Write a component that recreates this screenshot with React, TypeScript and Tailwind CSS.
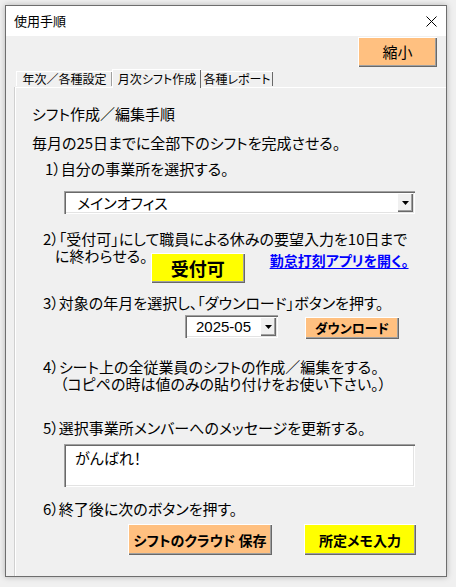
import React from "react";

const raised =
  "shadow-[inset_1px_1px_0_#ffffff,inset_-1px_-1px_0_#696969,inset_-2px_-2px_0_#a0a0a0]";
const sunken =
  "shadow-[inset_1px_1px_0_#a0a0a0,inset_2px_2px_0_#696969,inset_-1px_-1px_0_#ffffff,inset_-2px_-2px_0_#e3e3e3]";

function Arrow() {
  return (
    <div
      className={`w-[16px] h-[19px] bg-[#f0f0f0] flex items-center justify-center ${raised}`}
    >
      <svg width="7" height="4" viewBox="0 0 7 4">
        <polygon points="0,0 7,0 3.5,4" fill="#000" />
      </svg>
    </div>
  );
}

export default function App() {
  return (
    <div className="w-[456px] h-[587px] bg-[#f0f0f0] p-[5px] overflow-hidden text-black font-['Noto_Sans_CJK_JP',sans-serif] [font-feature-settings:'palt']">
      <div className="w-[442px] h-[572px] border border-[#6e6e6e] bg-[#f0f0f0] flex flex-col overflow-hidden shadow-[0_0_6px_rgba(0,0,0,0.25)]">
        {/* title bar */}
        <div className="h-[30px] shrink-0 bg-white flex items-center justify-between pl-[8px] pr-[9px]">
          <span className="text-[13px] leading-[16px]">使用手順</span>
          <svg width="11" height="11" viewBox="0 0 11 11">
            <path d="M0.5 0.5 L10.5 10.5 M10.5 0.5 L0.5 10.5" stroke="#000" strokeWidth="1" />
          </svg>
        </div>
        {/* body */}
        <div className="flex-1 flex flex-col">
          <div className="flex justify-end pr-[9px] pt-[1px]">
            <div
              className={`w-[79px] h-[30px] bg-[#ffc080] flex items-center justify-center text-[15px] leading-[18px] ${raised}`}
            >
              縮小
            </div>
          </div>
          {/* tabs */}
          <div className="flex items-end pl-[10px] h-[18px] mt-[2px] relative z-10 whitespace-nowrap">
            <div className="h-[15px] w-[96px] border-t border-l border-white shadow-[inset_-1px_0_0_#a0a0a0] flex items-center justify-center text-[12px] leading-[14px] mb-[1px]">
              年次／各種設定
            </div>
            <div className="h-[19px] w-[89px] -mb-[1px] bg-[#f0f0f0] border-t border-l border-white shadow-[inset_-1px_0_0_#696969] flex items-start justify-center pt-[1px] text-[12px] leading-[15px]">
              月次シフト作成
            </div>
            <div className="h-[15px] w-[72px] border-t border-white shadow-[inset_-1px_0_0_#696969] flex items-center justify-center text-[12px] leading-[14px] mb-[1px]">
              各種レポート
            </div>
          </div>
          {/* panel */}
          <div className="flex-1 ml-[9px] border-t border-l border-white shadow-[-1px_0_0_#d0d0d0] pl-[16px] pt-[16px] text-[15px] whitespace-nowrap">
            <div className="leading-[20px]">シフト作成／編集手順</div>
            <div className="leading-[20px] mt-[9px]">毎月の25日までに全部下のシフトを完成させる。</div>
            <div className="leading-[20px] mt-[6px] ml-[13px]">1）自分の事業所を選択する。</div>
            <div
              className={`mt-[12px] ml-[32px] w-[351px] h-[23px] bg-white flex items-center justify-between pl-[13px] pr-[2px] ${sunken}`}
            >
              <span className="text-[15px] leading-[18px]">メインオフィス</span>
              <Arrow />
            </div>
            <div className="mt-[16px] ml-[11px] leading-[17px]">
              2）「受付可」にして職員による休みの要望入力を10日まで
            </div>
            <div className="flex items-start">
              <div className="ml-[23px] leading-[17px]">に終わらせる。</div>
              <div
                className={`ml-[3px] mt-[6px] w-[94px] h-[30px] bg-[#ffff00] flex items-center justify-center font-bold text-[18px] leading-[20px] ${raised}`}
              >
                受付可
              </div>
              <div className="ml-[25px] mt-[5px] leading-[16px] text-[14px] font-bold text-[#0000ff] underline underline-offset-2">
                勤怠打刻アプリを開く。
              </div>
            </div>
            <div className="mt-[10px] ml-[11px] leading-[20px]">
              3）対象の年月を選択し、「ダウンロード」ボタンを押す。
            </div>
            <div className="flex items-start mt-[2px]">
              <div
                className={`ml-[153px] w-[93px] h-[23px] bg-white flex items-center justify-between pl-[11px] pr-[2px] ${sunken}`}
              >
                <span className="text-[15px] leading-[18px] font-['Liberation_Sans',sans-serif]">2025-05</span>
                <Arrow />
              </div>
              <div
                className={`ml-[27px] mt-[2px] w-[94px] h-[22px] bg-[#ffc080] flex items-center justify-center font-bold text-[13px] leading-[16px] ${raised}`}
              >
                ダウンロード
              </div>
            </div>
            <div className="mt-[19px] ml-[11px] leading-[17px]">
              4）シート上の全従業員のシフトの作成／編集をする。
            </div>
            <div className="ml-[28px] leading-[17px]">
              （コピペの時は値のみの貼り付けをお使い下さい。）
            </div>
            <div className="mt-[26px] ml-[11px] leading-[20px]">
              5）選択事業所メンバーへのメッセージを更新する。
            </div>
            <div
              className={`mt-[6px] ml-[32px] w-[351px] h-[43px] bg-white pl-[11px] pt-[3px] ${sunken}`}
            >
              <span className="text-[15px] leading-[18px]">がんばれ！</span>
            </div>
            <div className="mt-[12px] ml-[11px] leading-[20px]">6）終了後に次のボタンを押す。</div>
            <div className="flex mt-[5px]">
              <div
                className={`ml-[96px] w-[144px] h-[31px] bg-[#ffc080] flex items-center justify-center font-bold text-[14px] leading-[18px] ${raised}`}
              >
                シフトのクラウド 保存
              </div>
              <div
                className={`ml-[32px] w-[112px] h-[31px] bg-[#ffff00] flex items-center justify-center font-bold text-[14px] leading-[18px] ${raised}`}
              >
                所定メモ入力
              </div>
            </div>
          </div>
        </div>
      </div>
    </div>
  );
}
